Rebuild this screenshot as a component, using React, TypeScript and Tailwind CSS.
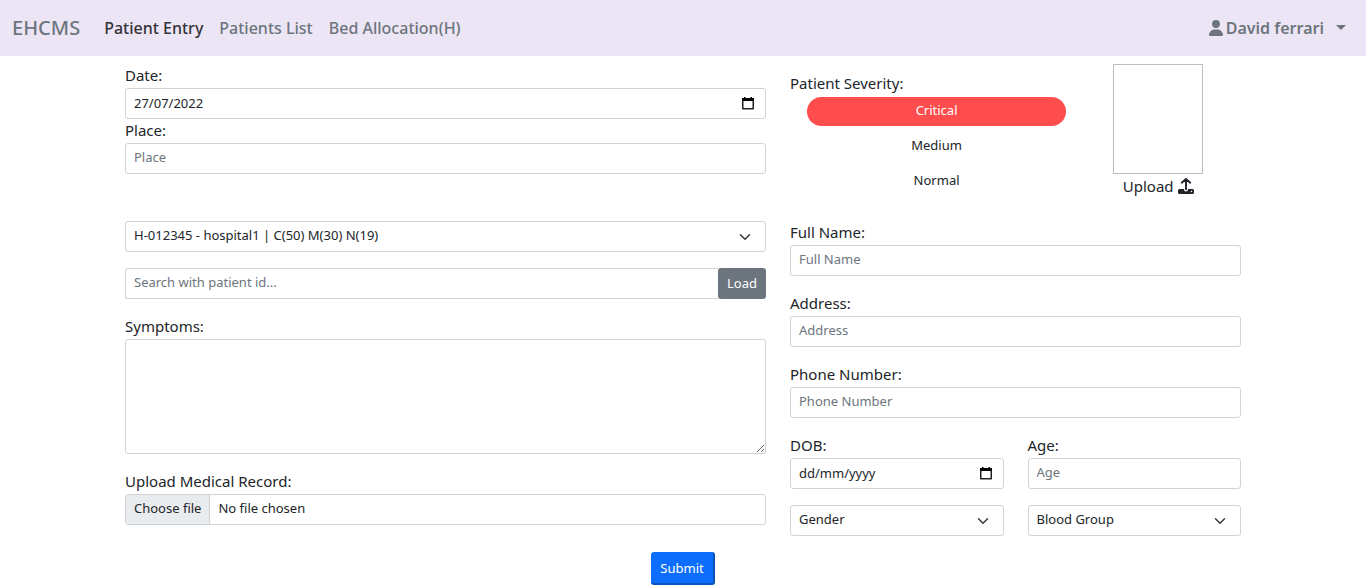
import { useState } from "react";
import type { ReactNode } from "react";
import { FaUser } from "react-icons/fa6";

const control =
  "block h-[31px] w-full min-w-0 rounded-[3px] border border-[#ced4da] bg-white px-2 pb-[3px] text-[13px] leading-5 text-[#212529] placeholder:text-[#6c757d] placeholder:opacity-100 focus:outline-none focus:border-[#86b7fe]";

function Field({ id, label, children }: { id: string; label: string; children: ReactNode }) {
  return (
    <div>
      <label htmlFor={id} className="block pb-0.5 leading-[22px]">
        {label}
      </label>
      {children}
    </div>
  );
}

function TextField({ id, label }: { id: string; label: string }) {
  return (
    <Field id={id} label={`${label}:`}>
      <input id={id} type="text" placeholder={label} className={control} />
    </Field>
  );
}

function CalendarIcon() {
  return (
    <svg viewBox="0 0 12 13" className="h-[13px] w-3" aria-hidden="true">
      <path d="M2 0h1.500v2H2zM8.500 0H10v2H8.500zM0 1h12v3H0z" fill="#000" />
      <path d="M.75 3.500v8.250h10.500V3.500" fill="none" stroke="#222" strokeWidth="1.500" strokeLinejoin="round" />
    </svg>
  );
}

function UploadIcon() {
  return (
    <svg viewBox="0 0 16 16" className="size-4" aria-hidden="true">
      <path
        d="M3.800 4.700 8 .9l4.200 3.800M8 1.200v10"
        fill="none"
        stroke="currentColor"
        strokeWidth="1.900"
        strokeLinecap="round"
        strokeLinejoin="round"
      />
      <path
        d="M1.500 11H6v.5a2 2 0 0 0 4 0V11h4.500A1.500 1.500 0 0 1 16 12.500v2a1.500 1.500 0 0 1-1.500 1.500h-13A1.500 1.500 0 0 1 0 14.500v-2A1.500 1.500 0 0 1 1.500 11zm12 1.750a.75.75 0 1 0 0 1.500.75.75 0 0 0 0-1.500z"
        fill="currentColor"
      />
    </svg>
  );
}

function DateField({ id, label, value }: { id: string; label: string; value?: string }) {
  return (
    <Field id={id} label={label}>
      <div className="flex h-[31px] items-center rounded-[3px] border border-[#ced4da] bg-white pr-[11px] pl-2">
        <input
          id={id}
          type="text"
          defaultValue={value}
          placeholder="dd/mm/yyyy"
          className="w-full min-w-0 pb-0.5 text-[13px] leading-5 text-[#212529] placeholder:text-[#212529] placeholder:opacity-100 focus:outline-none"
        />
        <button type="button" aria-label="Open calendar" className="shrink-0">
          <CalendarIcon />
        </button>
      </div>
    </Field>
  );
}

function SelectField({ label, options }: { label: string; options: string[] }) {
  return (
    <div className="grid min-w-0 items-center">
      <select
        aria-label={label}
        className={`${control} col-start-1 row-start-1 appearance-none pr-9`}
      >
        {options.map((option) => (
          <option key={option}>{option}</option>
        ))}
      </select>
      <svg
        viewBox="0 0 16 16"
        className="pointer-events-none col-start-1 row-start-1 mr-[15px] h-3 w-3 justify-self-end"
        fill="none"
        stroke="#343a40"
        strokeWidth="2"
        strokeLinecap="round"
        strokeLinejoin="round"
        aria-hidden="true"
      >
        <path d="m2 5 6 6 6-6" />
      </svg>
    </div>
  );
}

function Navbar() {
  return (
    <nav className="flex h-14 items-center bg-[#ece5f6] pr-5 pb-px pl-3 text-base font-medium text-[#6c757d]">
      <a href="#home" className="mr-6 text-xl leading-7">
        EHCMS
      </a>
      <div className="flex gap-4">
        <a href="#entry" className="text-[#343438]">
          Patient Entry
        </a>
        <a href="#patients">Patients List</a>
        <a href="#beds">Bed Allocation(H)</a>
      </div>
      <button type="button" className="ml-auto flex items-center font-semibold">
        <FaUser className="mr-0.5 size-4" />
        David ferrari
        <svg viewBox="0 0 10 5" className="ml-3 h-[5px] w-2.5" fill="currentColor" aria-hidden="true">
          <path d="M0 0h10L5 5z" />
        </svg>
      </button>
    </nav>
  );
}

function Severity() {
  const [severity, setSeverity] = useState("Critical");
  return (
    <div role="radiogroup" aria-labelledby="severity-label" className="w-[65%] pt-2">
      <div id="severity-label" className="pb-0.5 leading-[22px]">
        Patient Severity:
      </div>
      <div className="flex flex-col gap-1.5 px-[17px] pt-px text-center text-[13px]">
        {["Critical", "Medium", "Normal"].map((level) => (
          <label
            key={level}
            className="relative block cursor-pointer rounded-full pb-0.5 leading-[27px] has-checked:bg-[#ff4d4d] has-checked:text-white"
          >
            <input
              type="radio"
              name="severity"
              value={level}
              checked={severity === level}
              onChange={() => setSeverity(level)}
              className="sr-only"
            />
            {level}
          </label>
        ))}
      </div>
    </div>
  );
}

export default function App() {
  return (
    <div className="font-['Noto_Sans',sans-serif] text-[15px] leading-6 text-[#212529]">
      <Navbar />
      <form className="mx-auto max-w-[1140px] px-3 pt-2" onSubmit={(event) => event.preventDefault()}>
        <div className="grid grid-cols-[641fr_451fr] gap-x-6">
          <div className="pb-[47px]">
            <DateField id="date" label="Date:" value="27/07/2022" />
            <TextField id="place" label="Place" />
          </div>
          <div className="flex items-start gap-[30px]">
            <Severity />
            <div className="w-[90px]">
              <div className="h-[110px] border border-[#bfbfbf]" />
              <label className="relative flex cursor-pointer items-center justify-center gap-1">
                <input type="file" accept="image/*" className="sr-only" />
                Upload
                <UploadIcon />
              </label>
            </div>
          </div>

          <div className="flex min-w-0 flex-col gap-4">
            <SelectField label="Hospital" options={["H-012345 - hospital1 | C(50) M(30) N(19)"]} />
            <div className="flex">
              <input
                type="search"
                aria-label="Patient id"
                placeholder="Search with patient id..."
                className={`${control} rounded-r-none border-r-0`}
              />
              <button
                type="button"
                className="h-[31px] shrink-0 rounded-[3px] bg-[#6c757d] px-[9px] pb-0.5 text-[13px] leading-5 text-white"
              >
                Load
              </button>
            </div>
            <Field id="symptoms" label="Symptoms:">
              <textarea
                id="symptoms"
                className="block h-[115px] w-full resize rounded-[3px] border border-[#ced4da] px-2 py-1 text-[13px] focus:outline-none"
              />
            </Field>
            <div>
              <label htmlFor="record" className="block pb-0.5 leading-[22px]">
                Upload Medical Record:
              </label>
              <label className="relative flex h-[31px] cursor-pointer overflow-hidden rounded-[3px] border border-[#ced4da] text-[13px] leading-[27px]">
                <input id="record" type="file" className="sr-only" />
                <span className="border-r border-[#ced4da] bg-[#e9ecef] px-2">Choose file</span>
                <span className="px-2">No file chosen</span>
              </label>
            </div>
          </div>

          <div className="flex min-w-0 flex-col gap-4">
            <TextField id="full-name" label="Full Name" />
            <TextField id="address" label="Address" />
            <TextField id="phone" label="Phone Number" />
            <div className="grid grid-cols-2 gap-x-6 gap-y-4">
              <DateField id="dob" label="DOB:" />
              <TextField id="age" label="Age" />
              <SelectField label="Gender" options={["Gender", "Female", "Male", "Other"]} />
              <SelectField
                label="Blood Group"
                options={["Blood Group", "A+", "A-", "B+", "B-", "AB+", "AB-", "O+", "O-"]}
              />
            </div>
          </div>
        </div>
        <div className="flex justify-center pt-4">
          <button
            type="submit"
            className="h-[33px] rounded-[3px] border-r-2 border-b-2 border-[#0a52be] bg-[#0d6efd] px-[9px] text-[13px] leading-5 text-white"
          >
            Submit
          </button>
        </div>
      </form>
    </div>
  );
}
